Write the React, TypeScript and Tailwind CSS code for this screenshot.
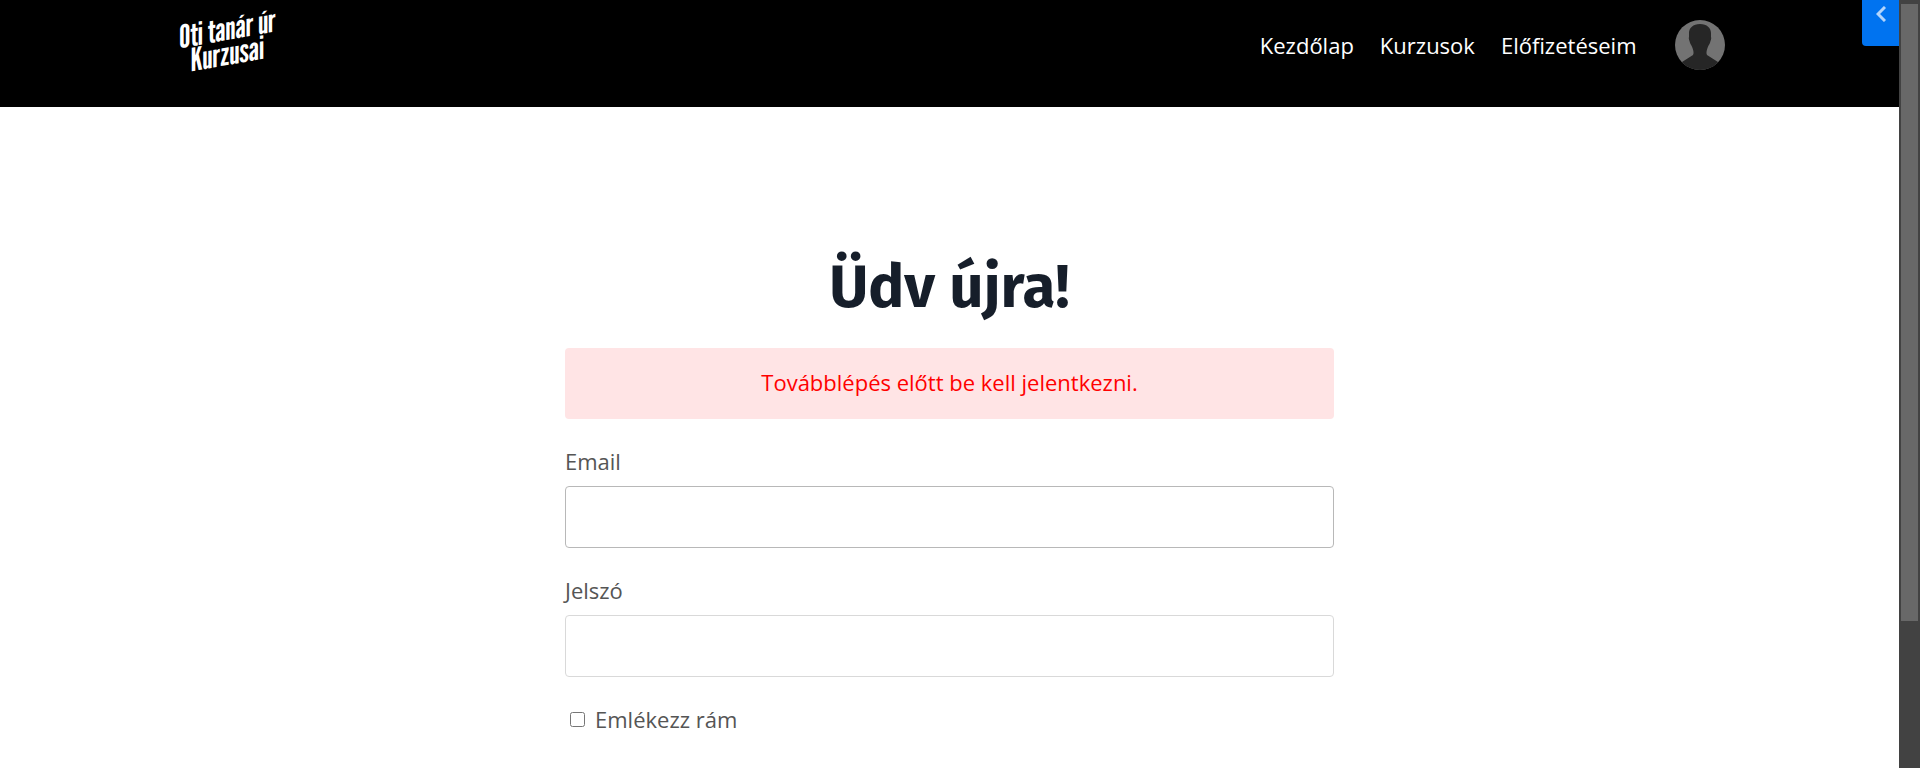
import { useState } from "react";

const NAV_LINKS = [
  { label: "Kezdőlap", href: "#kezdolap" },
  { label: "Kurzusok", href: "#kurzusok" },
  { label: "Előfizetéseim", href: "#elofizeteseim" },
];

function Logo() {
  return (
    <a
      href="#"
      className="flex flex-col items-center -skew-y-10 font-['League_Gothic','Open_Sans',sans-serif] text-[32px] leading-[25px] whitespace-nowrap text-white"
    >
      <span>Oti tanár úr</span>
      <span>Kurzusai</span>
    </a>
  );
}

function Avatar() {
  return (
    <button type="button" aria-label="Profil" className="size-[50px] overflow-hidden rounded-full">
      <svg viewBox="0 0 50 50" className="size-full">
        <rect width="50" height="50" fill="#737373" />
        <path
          d="M25 4C32 4 36 8 36 13V17C36.500 18 36 20 35.500 21C35 24 33.500 25 32.500 28C31.500 31 31 33 32 35L43 42L46 50H4L7 42L18 35C19 33 18.500 31 17.500 28C16.500 25 15 24 14.500 21C14 20 13.500 18 14 17V13C14 8 18 4 25 4Z"
          fill="#262626"
        />
      </svg>
    </button>
  );
}

function Header() {
  return (
    <header className="h-[107px] bg-black">
      <div className="mx-auto flex max-w-[1550px] items-start justify-between">
        <div className="pt-4 pl-1">
          <Logo />
        </div>
        <nav className="flex items-center pt-5">
          <div className="mr-[38px] flex gap-[26px]">
            {NAV_LINKS.map(link => (
              <a key={link.href} href={link.href} className="text-[22px] leading-[30px] text-white">
                {link.label}
              </a>
            ))}
          </div>
          <Avatar />
        </nav>
      </div>
    </header>
  );
}

function LoginForm() {
  const [email, setEmail] = useState("");
  const [password, setPassword] = useState("");
  const [remember, setRemember] = useState(false);

  return (
    <form
      onSubmit={e => e.preventDefault()}
      className="mx-auto max-w-[769px] pt-[140px] text-[22px] text-[#555555]"
    >
      <h1 className="text-center font-['Fira_Sans','Noto_Sans',sans-serif] text-[60px] leading-20 font-bold text-[#161e2a]">
        Üdv újra!
      </h1>

      <div role="alert" className="mt-[21px] rounded bg-[#ffe4e5] pt-[17px] pb-5 text-center leading-[34px] text-[#ff0000]">
        Továbblépés előtt be kell jelentkezni.
      </div>

      {/* Email */}
      <label htmlFor="email" className="mt-6 block leading-9">
        Email
      </label>
      <input
        id="email"
        type="email"
        value={email}
        onChange={e => setEmail(e.target.value)}
        className="mt-[7px] block h-[62px] w-full rounded border border-[#b8b8b8] px-4 outline-none"
      />

      {/* Password */}
      <label htmlFor="password" className="mt-6 block leading-9">
        Jelszó
      </label>
      <input
        id="password"
        type="password"
        value={password}
        onChange={e => setPassword(e.target.value)}
        className="mt-[7px] block h-[62px] w-full rounded border border-[#d9d9d9] px-4 outline-none"
      />

      {/* Remember me */}
      <div className="mt-6 flex items-center gap-[10px] pl-[5px] leading-9">
        <input
          id="remember"
          type="checkbox"
          checked={remember}
          onChange={e => setRemember(e.target.checked)}
          className="size-[15px]"
        />
        <label htmlFor="remember">Emlékezz rám</label>
      </div>

      <button
        type="submit"
        aria-label="Bejelentkezés"
        className="mx-auto mt-10 block h-16 w-[220px] rounded bg-black shadow-lg"
      />
    </form>
  );
}

export default function App() {
  return (
    <div className="flex h-screen overflow-hidden bg-white font-['Open_Sans',sans-serif]">
      <div className="relative min-w-0 flex-1 overflow-hidden">
        <Header />
        <LoginForm />
        <button
          type="button"
          aria-label="Megnyitás"
          className="absolute top-0 right-0 flex h-[46px] w-[37px] justify-center rounded-bl bg-[#0073f0] pt-[6px]"
        >
          <svg viewBox="0 0 10 16" className="h-4 w-[10px]" fill="none" stroke="#b3d5fb" strokeWidth="3">
            <path d="M9 1L2 8L9 15" />
          </svg>
        </button>
      </div>

      {/* Scrollbar */}
      <div className="w-[21px] bg-[#424242] px-[2px] pt-1">
        <div className="h-[617px] bg-[#686868]" />
      </div>
    </div>
  );
}
